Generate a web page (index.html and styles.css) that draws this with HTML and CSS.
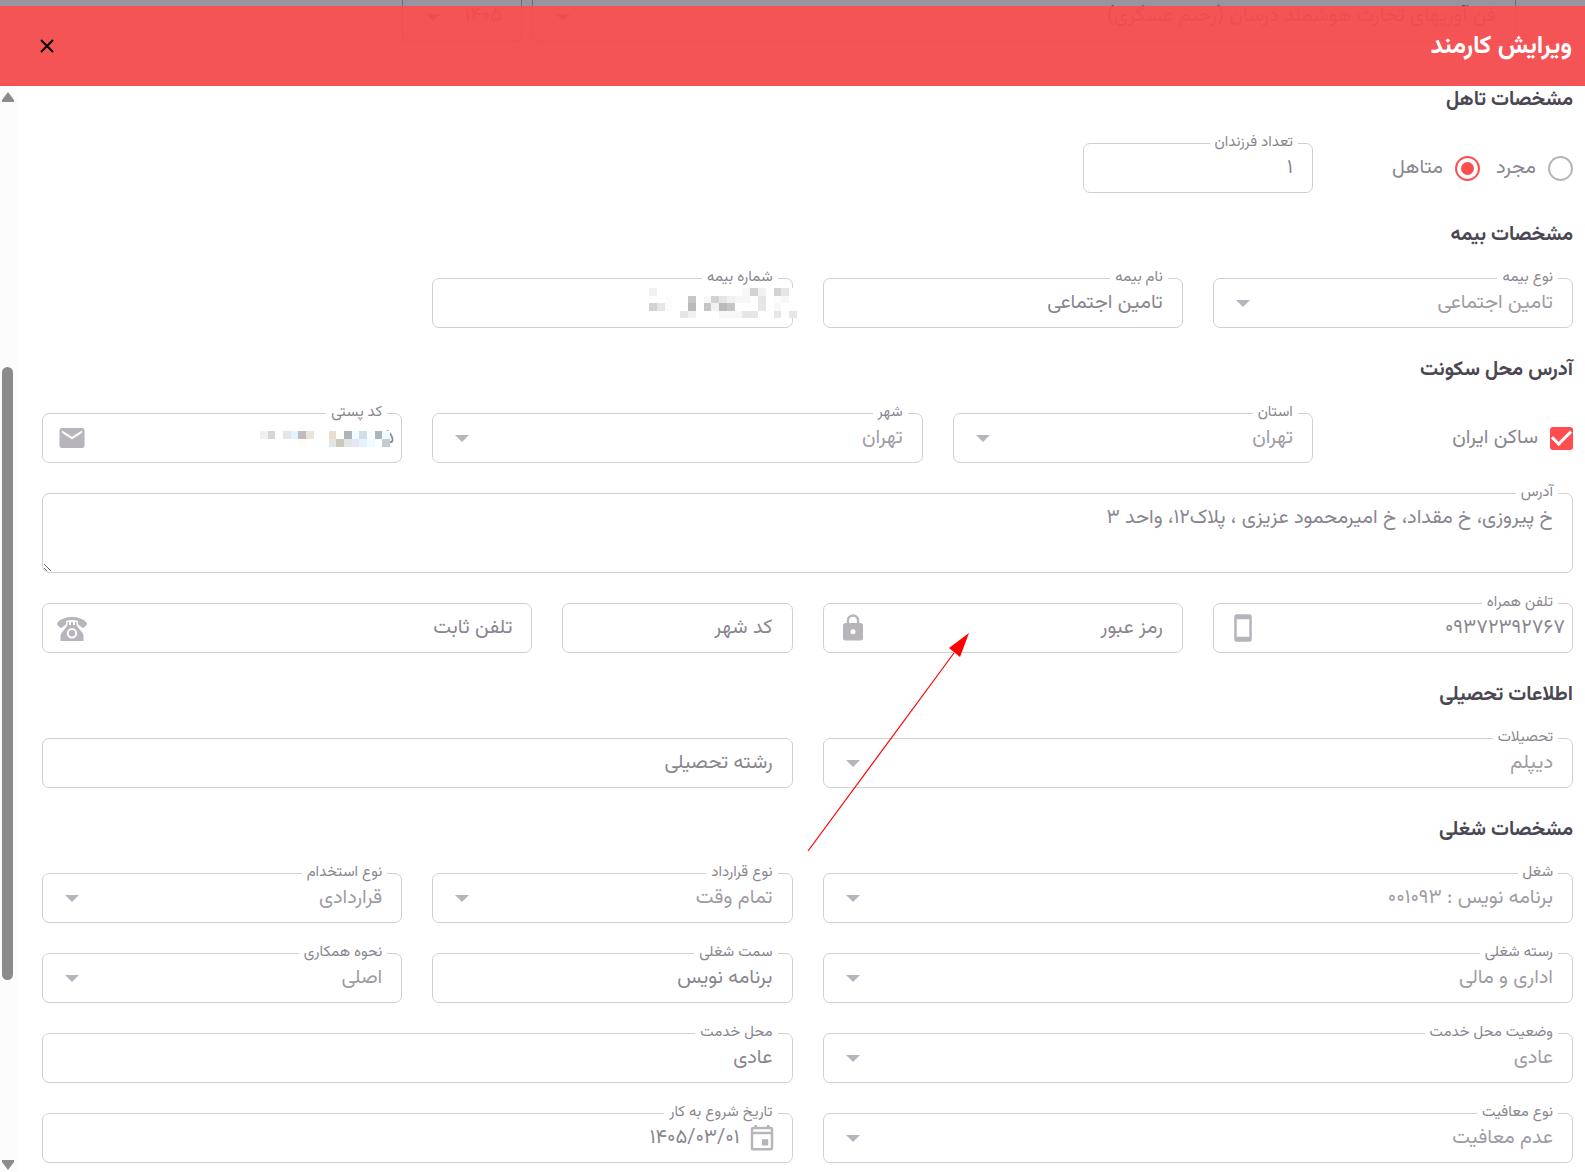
FILE: index.html
```
<!DOCTYPE html>
<html lang="fa" dir="rtl">
<head>
  <meta charset="utf-8">
  <title>ویرایش کارمند</title>
  <link rel="stylesheet" href="styles.css">
</head>
<body>
  <!-- Page behind the dialog -->
  <div class="page-bar">
    <div class="page-box company">
      <span>فن آوریهای تجارت هوشمند درسان (رحیم عسگری)</span>
      <svg class="caret" viewBox="0 0 14 7"><path d="M0 0h14L7 7z"/></svg>
    </div>
    <div class="page-box year">
      <span>۱۴۰۵</span>
      <svg class="caret" viewBox="0 0 14 7"><path d="M0 0h14L7 7z"/></svg>
    </div>
  </div>

  <div class="dialog">
    <header class="dialog-header">
      <h1>ویرایش کارمند</h1>
      <button type="button" class="close-button" aria-label="بستن">
        <svg viewBox="0 0 14 14"><path d="M1 1l12 12M13 1L1 13"/></svg>
      </button>
    </header>

    <div class="dialog-body">
      <form class="employee-form">

        <h2>مشخصات تاهل</h2>
        <div class="row">
          <div class="choices col-2">
            <label><input type="radio" name="marital"> مجرد</label>
            <label><input type="radio" name="marital" checked> متاهل</label>
          </div>
          <div class="field col-2">
            <label for="children">تعداد فرزندان</label>
            <input type="text" id="children" value="۱">
          </div>
        </div>

        <h2>مشخصات بیمه</h2>
        <div class="row">
          <div class="field col-3">
            <label for="insuranceType">نوع بیمه</label>
            <select id="insuranceType"><option>تامین اجتماعی</option></select>
            <svg class="caret" viewBox="0 0 14 7"><path d="M0 0h14L7 7z"/></svg>
          </div>
          <div class="field col-3">
            <label for="insuranceName">نام بیمه</label>
            <input type="text" id="insuranceName" value="تامین اجتماعی">
          </div>
          <div class="field col-3">
            <label for="insuranceNumber">شماره بیمه</label>
            <input type="text" id="insuranceNumber">
            <svg class="mosaic mosaic-insurance" viewBox="0 0 19 4" preserveAspectRatio="none">
              <path fill="#fff" d="M0 0h19v4H0z"/>
              <path fill="#f1f1f1" d="M0 0h1v1H0zM14 0h1v1h-1zM8 2h1v1H8zM5 3h1v1H5zM10 1h1v1h-1z"/>
              <path fill="#f7f7f7" d="M12 0h1v1h-1zM7 1h1v1H7zM11 1h2v1h-2zM17 1h1v1h-1zM16 2h1v1h-1zM9 3h3v1H9z"/>
              <path fill="#fcfcfc" d="M2 1h1v2H2zM16 1h1v1h-1z"/>
              <path fill="#d2d2d2" d="M13 0h1v1h-1zM16 0h1v1h-1zM8 1h1v1H8zM0 2h1v1H0z"/>
              <path fill="#e6e6e6" d="M17 0h1v1h-1zM14 1h1v2h-1zM1 2h1v1H1zM9 1h1v1H9zM4 3h1v1H4zM12 3h2v1h-2zM16 3h1v1h-1zM18 3h1v1h-1z"/>
              <path fill="#c6c6c6" d="M5 1h1v1H5zM7 2h1v1H7zM10 2h1v1h-1z"/>
              <path fill="#bababa" d="M5 2h1v1H5zM9 2h1v1H9z"/>
            </svg>
          </div>
        </div>

        <h2>آدرس محل سکونت</h2>
        <div class="row">
          <div class="choices col-2">
            <label><input type="checkbox" checked> ساکن ایران</label>
          </div>
          <div class="field col-3">
            <label for="province">استان</label>
            <select id="province"><option>تهران</option></select>
            <svg class="caret" viewBox="0 0 14 7"><path d="M0 0h14L7 7z"/></svg>
          </div>
          <div class="field col-4">
            <label for="city">شهر</label>
            <select id="city"><option>تهران</option></select>
            <svg class="caret" viewBox="0 0 14 7"><path d="M0 0h14L7 7z"/></svg>
          </div>
          <div class="field col-3">
            <label for="postalCode">کد پستی</label>
            <input type="text" id="postalCode" class="number" dir="ltr" value="۵">
            <svg class="mosaic mosaic-postal" viewBox="0 0 17 2" preserveAspectRatio="none">
              <path fill="#fff" d="M0 0h17v2H0z"/>
              <path fill="#f0f0f0" d="M0 0h1v1H0z"/>
              <path fill="#d6d6d6" d="M1 0h1v1H1z"/>
              <path fill="#e4e6e5" d="M3 0h1v1H3zM9 1h1v1H9zM11 1h1v1h-1z"/>
              <path fill="#e1f4fe" d="M4 0h1v1H4zM13 1h1v1h-1z"/>
              <path fill="#c0bcbd" d="M5 0h1v1H5z"/>
              <path fill="#ece3df" d="M6 0h1v1H6z"/>
              <path fill="#fffdf3" d="M5 1h1v1H5z"/>
              <path fill="#ecdccd" d="M9 0h1v1H9z"/>
              <path fill="#adb5b8" d="M11 0h1v1h-1zM15 0h1v1h-1z"/>
              <path fill="#eefbff" d="M12 0h1v1h-1zM16 0h1v1h-1zM14 1h1v1h-1z"/>
              <path fill="#d2dde8" d="M13 0h1v1h-1z"/>
              <path fill="#cbc8bf" d="M10 1h1v1h-1z"/>
              <path fill="#e6e6f6" d="M12 1h1v1h-1z"/>
              <path fill="#c5ccd0" d="M16 1h1v1h-1z"/>
            </svg>
            <svg class="icon" viewBox="0 0 24 24"><path d="M20 4H4a2 2 0 0 0-2 2v12a2 2 0 0 0 2 2h16a2 2 0 0 0 2-2V6a2 2 0 0 0-2-2zm0 4l-8 5-8-5V6l8 5 8-5z"/></svg>
          </div>
          <div class="field col-12">
            <label for="address">آدرس</label>
            <textarea id="address">خ پیروزی، خ مقداد، خ امیرمحمود عزیزی ، پلاک۱۲، واحد ۳</textarea>
          </div>
          <div class="field col-3">
            <label for="mobile">تلفن همراه</label>
            <input type="text" id="mobile" class="number" dir="ltr" value="۰۹۳۷۲۳۹۲۷۶۷">
            <svg class="icon" viewBox="0 0 24 24"><path d="M17 1H7a2 2 0 0 0-2 2v18a2 2 0 0 0 2 2h10a2 2 0 0 0 2-2V3a2 2 0 0 0-2-2zm0 18H7V5h10z"/></svg>
          </div>
          <div class="field col-3">
            <input type="password" id="password" placeholder="رمز عبور" aria-label="رمز عبور">
            <svg class="icon" viewBox="0 0 24 24"><path d="M18 8h-1V6A5 5 0 0 0 7 6v2H6a2 2 0 0 0-2 2v10a2 2 0 0 0 2 2h12a2 2 0 0 0 2-2V10a2 2 0 0 0-2-2zm-6 9a2 2 0 1 1 0-4 2 2 0 0 1 0 4zm3.100-9H8.900V6a3.100 3.100 0 0 1 6.200 0z"/></svg>
          </div>
          <div class="field col-2">
            <input type="text" id="areaCode" placeholder="کد شهر" aria-label="کد شهر">
          </div>
          <div class="field col-4">
            <input type="text" id="landline" placeholder="تلفن ثابت" aria-label="تلفن ثابت">
            <svg class="icon" viewBox="0 0 30 30"><path fill-rule="evenodd" d="M15 4C9 4 3.500 6 .6 9.400c-.7.800-.7 1.700 0 2.500l2.100 2.300c.7.800 1.600.8 2.400.2l3.300-2.700c.5-.4.7-.9.7-1.500V8C11 7.300 13 7 15 7s4 .3 5.900 1v2.200c0 .6.2 1.100.7 1.500l3.300 2.700c.8.600 1.700.6 2.400-.2l2.100-2.300c.7-.8.7-1.700 0-2.500C26.500 6 21 4 15 4zM10.500 9v3.500L4.500 20c-.6.800-1 1.700-1 2.700V28h23v-5.300c0-1-.4-1.900-1-2.700l-6-7.500V9H18v3h-2V9h-2v3h-2V9zM15 15a5.200 5.200 0 1 1 0 10.400A5.200 5.200 0 0 1 15 15zm0 2a3.200 3.200 0 1 0 0 6.400 3.200 3.200 0 0 0 0-6.400z"/></svg>
          </div>
        </div>

        <h2>اطلاعات تحصیلی</h2>
        <div class="row">
          <div class="field col-6">
            <label for="education">تحصیلات</label>
            <select id="education"><option>دیپلم</option></select>
            <svg class="caret" viewBox="0 0 14 7"><path d="M0 0h14L7 7z"/></svg>
          </div>
          <div class="field col-6">
            <input type="text" id="major" placeholder="رشته تحصیلی" aria-label="رشته تحصیلی">
          </div>
        </div>

        <h2>مشخصات شغلی</h2>
        <div class="row">
          <div class="field col-6">
            <label for="job">شغل</label>
            <select id="job"><option>برنامه نویس : ۰۰۱۰۹۳</option></select>
            <svg class="caret" viewBox="0 0 14 7"><path d="M0 0h14L7 7z"/></svg>
          </div>
          <div class="field col-3">
            <label for="contractType">نوع قرارداد</label>
            <select id="contractType"><option>تمام وقت</option></select>
            <svg class="caret" viewBox="0 0 14 7"><path d="M0 0h14L7 7z"/></svg>
          </div>
          <div class="field col-3">
            <label for="employmentType">نوع استخدام</label>
            <select id="employmentType"><option>قراردادی</option></select>
            <svg class="caret" viewBox="0 0 14 7"><path d="M0 0h14L7 7z"/></svg>
          </div>
          <div class="field col-6">
            <label for="jobCategory">رسته شغلی</label>
            <select id="jobCategory"><option>اداری و مالی</option></select>
            <svg class="caret" viewBox="0 0 14 7"><path d="M0 0h14L7 7z"/></svg>
          </div>
          <div class="field col-3">
            <label for="jobTitle">سمت شغلی</label>
            <input type="text" id="jobTitle" value="برنامه نویس">
          </div>
          <div class="field col-3">
            <label for="cooperation">نحوه همکاری</label>
            <select id="cooperation"><option>اصلی</option></select>
            <svg class="caret" viewBox="0 0 14 7"><path d="M0 0h14L7 7z"/></svg>
          </div>
          <div class="field col-6">
            <label for="placeStatus">وضعیت محل خدمت</label>
            <select id="placeStatus"><option>عادی</option></select>
            <svg class="caret" viewBox="0 0 14 7"><path d="M0 0h14L7 7z"/></svg>
          </div>
          <div class="field col-6">
            <label for="place">محل خدمت</label>
            <input type="text" id="place" value="عادی">
          </div>
          <div class="field col-6">
            <label for="exemption">نوع معافیت</label>
            <select id="exemption"><option>عدم معافیت</option></select>
            <svg class="caret" viewBox="0 0 14 7"><path d="M0 0h14L7 7z"/></svg>
          </div>
          <div class="field date-field col-6">
            <label for="startDate">تاریخ شروع به کار</label>
            <svg class="calendar" viewBox="0 0 24 24"><path d="M17 13h-5v5h5zM16 1v2H8V1H6v2H5a2 2 0 0 0-2 2v15a2 2 0 0 0 2 2h14a2 2 0 0 0 2-2V5a2 2 0 0 0-2-2h-1V1zm3 19H5V9h14zm0-13H5V5h14z"/></svg>
            <input type="text" id="startDate" value="۱۴۰۵/۰۳/۰۱">
          </div>
        </div>
      </form>

      <div class="scrollbar" aria-hidden="true">
        <svg viewBox="0 0 12 10"><path d="M6 0L12 8v2H0V8z"/></svg>
        <div class="track"><div class="thumb"></div></div>
        <svg viewBox="0 0 12 10"><path d="M6 10L12 2V0H0v2z"/></svg>
      </div>
    </div>
  </div>

  <!-- Arrow pointing at the password field -->
  <svg class="pointer" viewBox="0 0 162 219"><path class="pointer-line" d="M1 218L147 20"/><path class="pointer-head" d="M162 0L142 15l11 9z"/></svg>
</body>
</html>
```
FILE: styles.css
```
* {
  box-sizing: border-box;
}

body {
  margin: 0;
  height: 100vh;
  overflow: hidden;
  background-color: #9794a0;
  font-family: "Vazirmatn", Roboto, "DejaVu Sans", sans-serif;
  font-size: 20px;
  color: #8a868f;
}

h1, h2 {
  margin: 0;
  font-weight: bold;
}

input, select, textarea {
  font: inherit;
  color: inherit;
}

/* Page behind the dialog */
.page-bar {
  position: absolute;
  top: 0;
  left: 402px;
  right: 69px;
  height: 42px;
  display: flex;
  gap: 10px;
  color: #55515c;
}

.page-box {
  display: flex;
  align-items: flex-start;
  justify-content: space-between;
  padding: 0 19px 0 23px;
  border: 1px solid #706d79;
  border-top: none;
  border-radius: 0 0 6px 6px;
  line-height: 32px;
}

.page-box .caret {
  margin-top: 14px;
  fill: #55515c;
}

.company {
  flex: 1;
}

.year {
  width: 120px;
}

/* Dialog */
.dialog {
  position: absolute;
  top: 6px;
  right: 0;
  bottom: 0;
  left: 0;
  display: flex;
  flex-direction: column;
}

.dialog-header {
  flex: none;
  height: 80px;
  display: flex;
  align-items: center;
  justify-content: space-between;
  padding: 0 13px 0 33px;
  background-color: rgba(255, 77, 79, 0.9);
  color: white;
}

.dialog-header h1 {
  font-size: 25px;
}

.close-button {
  display: flex;
  align-items: center;
  justify-content: center;
  width: 28px;
  height: 28px;
  padding: 0;
  border: none;
  background: none;
  cursor: pointer;
}

.close-button svg {
  width: 14px;
  height: 14px;
  stroke: black;
  stroke-width: 2;
}

.dialog-body {
  flex: 1;
  min-height: 0;
  display: flex;
  overflow: hidden;
  background-color: white;
}

.employee-form {
  flex: 1;
  padding: 0 12px 0 25px;
}

.employee-form h2 {
  font-size: 20px;
  line-height: 29px;
  margin-bottom: 28px;
  color: #4b4753;
}

.row {
  display: grid;
  grid-template-columns: repeat(12, 1fr);
  gap: 30px;
  margin-bottom: 28px;
}

.col-2 { grid-column: span 2; }
.col-3 { grid-column: span 3; }
.col-4 { grid-column: span 4; }
.col-6 { grid-column: span 6; }
.col-12 { grid-column: span 12; }

/* Outlined fields */
.field {
  position: relative;
  display: flex;
  min-height: 50px;
  border: 1px solid #d0d0d0;
  border-radius: 7px;
}

.field label {
  position: absolute;
  top: -13px;
  right: 14px;
  padding: 0 5px;
  background-color: white;
  font-size: 15px;
  line-height: 24px;
}

.field input, .field select, .field textarea {
  flex: 1;
  min-width: 0;
  width: 100%;
  margin: 0;
  padding: 0 19px 1px 60px;
  border: none;
  outline: none;
  background: transparent;
  appearance: none;
}

.field select {
  color: #9f9ca4;
}

.field input::placeholder {
  color: #8a868f;
  opacity: 1;
}

.field textarea {
  height: 78px;
  padding: 9px 19px;
  line-height: 30px;
  resize: vertical;
}

.field input.number {
  padding-right: 7px;
  text-align: right;
}

.caret {
  flex: none;
  width: 14px;
  height: 7px;
  fill: #b7b4bb;
}

.field .caret {
  position: absolute;
  left: 22px;
  top: 21px;
  pointer-events: none;
}

.icon {
  position: absolute;
  left: 14px;
  top: 9px;
  width: 30px;
  height: 30px;
  fill: #b7b4bb;
}

.date-field {
  align-items: center;
  padding-right: 15px;
}

.date-field .calendar {
  flex: none;
  width: 30px;
  height: 30px;
  fill: #b7b4bb;
}

.date-field input {
  align-self: stretch;
  padding-right: 7px;
}

.mosaic {
  position: absolute;
  shape-rendering: crispEdges;
}

.mosaic-insurance {
  top: 9px;
  right: -5px;
  width: 148px;
  height: 30px;
}

.mosaic-postal {
  top: 17px;
  right: 11px;
  width: 130px;
  height: 16px;
}

/* Radio buttons and check boxes */
.choices {
  display: flex;
  align-items: center;
  gap: 16px;
}

.choices label {
  display: flex;
  align-items: center;
  gap: 12px;
  line-height: 30px;
}

.choices input {
  flex: none;
  display: grid;
  place-content: center;
  margin: 0;
  appearance: none;
}

.choices input[type="radio"] {
  width: 25px;
  height: 25px;
  border: 2px solid #b7b4bb;
  border-radius: 50%;
}

.choices input[type="radio"]:checked {
  border-color: #ff4d4f;
}

.choices input[type="radio"]:checked::before {
  content: "";
  width: 13px;
  height: 13px;
  border-radius: 50%;
  background-color: #ff4d4f;
}

.choices input[type="checkbox"] {
  width: 23px;
  height: 23px;
  border: 2px solid #b7b4bb;
  border-radius: 3px;
}

.choices input[type="checkbox"]:checked {
  border-color: #ff4d4f;
  background-color: #ff4d4f;
}

.choices input[type="checkbox"]:checked::before {
  content: "";
  width: 16px;
  height: 8px;
  margin-bottom: 5px;
  border: solid white;
  border-width: 0 0 3px 3px;
  transform: rotate(-45deg);
}

/* Scroll bar on the left edge */
.scrollbar {
  flex: none;
  width: 17px;
  display: flex;
  flex-direction: column;
  align-items: flex-end;
  padding: 6px 3px 2px 2px;
  background-color: #fcfcfc;
}

.scrollbar svg {
  width: 12px;
  height: 10px;
  fill: #8b8b8b;
}

.track {
  flex: 1;
  width: 11px;
  display: grid;
  grid-template-rows: 25fr 58fr 17fr;
}

.thumb {
  grid-row: 2;
  border-radius: 6px;
  background-color: #8b8b8b;
}

.pointer {
  position: absolute;
  left: 807px;
  top: 633px;
  width: 162px;
  height: 219px;
  pointer-events: none;
}

.pointer-line {
  stroke: red;
  stroke-width: 1.2;
}

.pointer-head {
  fill: red;
}
```
